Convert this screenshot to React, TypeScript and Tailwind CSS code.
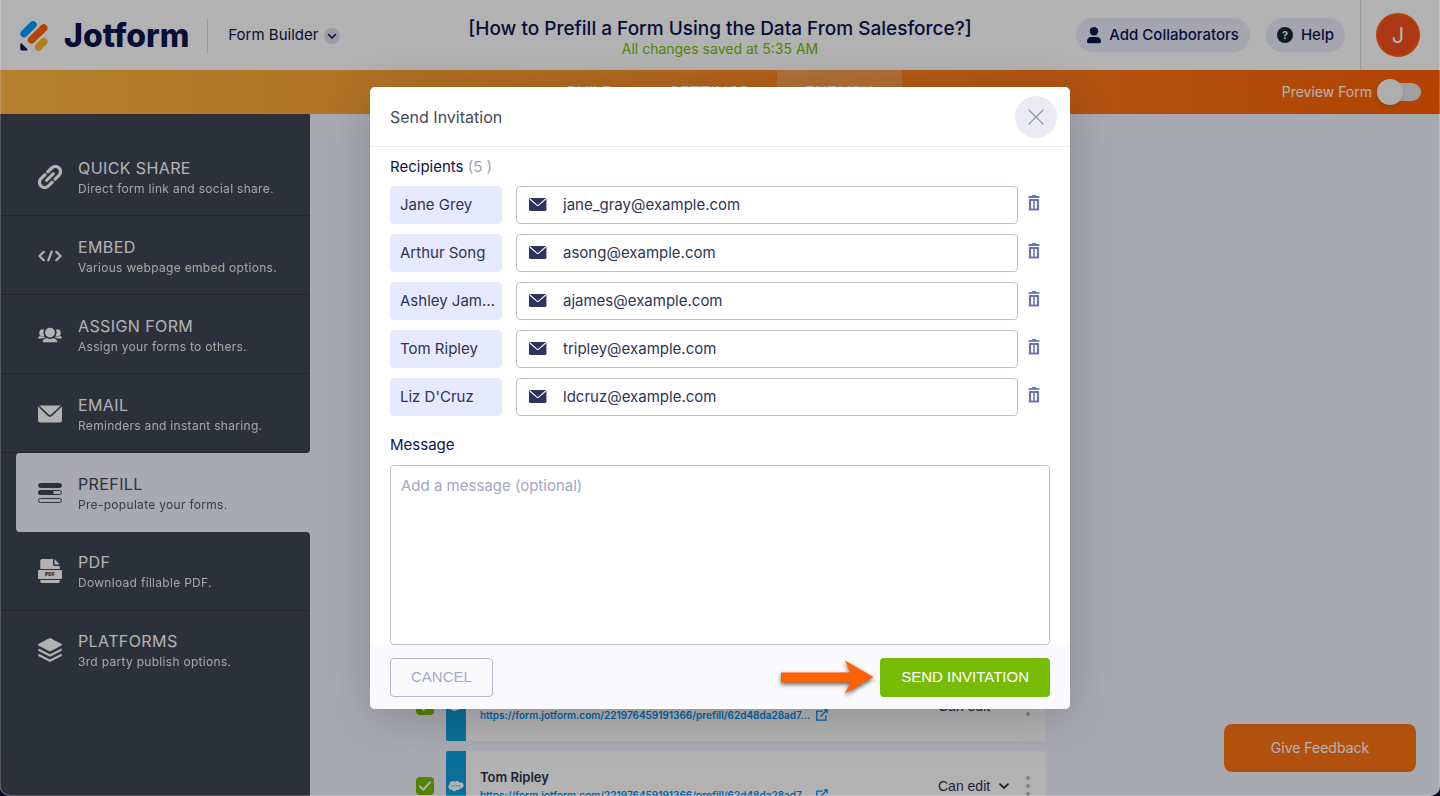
import type { ReactNode } from "react";

type NavItem = { title: string; detail: string; icon: ReactNode; active?: boolean };

const iconClass = "h-6 w-6 shrink-0";

const LinkIcon = () => (
  <svg viewBox="0 0 24 24" className={iconClass} fill="none" stroke="currentColor" strokeLinecap="round" aria-hidden="true">
    <path d="M8.600 15.400 15.400 8.600" strokeWidth="2.900" />
    <path d="M6.900 9.800 3 13.700a5.100 5.100 0 0 0 0 7.300 5.100 5.100 0 0 0 7.300 0l3.900-3.900" strokeWidth="3.200" />
    <path d="M9.800 6.900 13.700 3a5.100 5.100 0 0 1 7.300 0 5.100 5.100 0 0 1 0 7.300l-3.900 3.900" strokeWidth="3.200" />
  </svg>
);

const CodeIcon = () => (
  <svg viewBox="0 0 24 24" className={iconClass} fill="none" stroke="currentColor" strokeWidth="2.2" strokeLinecap="round" strokeLinejoin="round" aria-hidden="true">
    <path d="M5.8 7.8 1.4 12l4.4 4.2M18.2 7.8l4.4 4.2-4.4 4.2M13.7 7.6l-3.4 8.8" />
  </svg>
);

const PeopleIcon = () => (
  <svg viewBox="0 0 24 24" className={iconClass} fill="currentColor" aria-hidden="true">
    <circle cx="12" cy="9.6" r="4.9" />
    <path d="M4.6 19.2c.2-2.6 2.3-3.9 4.3-3.9 1 .5 2 .8 3.1.8s2.100-.3 3.100-.8c2 0 4.100 1.300 4.300 3.900Z" />
    <path d="M5.900 6.800a6.600 6.600 0 0 0 .4 5.800 3 3 0 0 1-5-2.800 3 3 0 0 1 4.600-3Z" />
    <path d="M18.100 6.800a6.600 6.600 0 0 1-.4 5.800 3 3 0 0 0 5-2.800 3 3 0 0 0-4.600-3Z" />
    <path d="M0 15.400c.2-1.500 1.100-2.300 2.400-2.300.7.500 2.500.7 3.900.4.4.4.8.7 1.200 1-1.100.1-2 .4-2.700.9ZM24 15.400c-.2-1.500-1.100-2.300-2.400-2.300-.7.500-2.500.7-3.900.4-.4.4-.8.7-1.200 1 1.100.1 2 .4 2.700.9Z" />
  </svg>
);

const MailIcon = () => (
  <svg viewBox="0 0 24 24" className={iconClass} fill="currentColor" aria-hidden="true">
    <path d="M1.200 3.500h21.600L13 12.700a1.500 1.500 0 0 1-2 0Z" />
    <path d="M0 4.600 9.700 13.800a3.300 3.300 0 0 0 4.600 0L24 4.600V18.300a2.200 2.200 0 0 1-2.200 2.200H2.200A2.200 2.200 0 0 1 0 18.300Z" />
  </svg>
);

const PrefillIcon = () => (
  <svg viewBox="0 0 24 24" className={iconClass} fill="none" stroke="currentColor" strokeWidth="1" aria-hidden="true">
    <rect x=".5" y="2.500" width="23" height="4" rx="2" fill="currentColor" />
    <rect x=".5" y="9.500" width="23" height="4" rx="2" />
    <path d="M2.500 9.500H15v4H2.500a2 2 0 0 1 0-4Z" fill="currentColor" />
    <rect x=".5" y="17.500" width="23" height="4" rx="2" />
  </svg>
);

const PdfIcon = () => (
  <svg viewBox="0 0 24 24" className={iconClass} aria-hidden="true">
    <path fill="currentColor" d="M2.300 1.500A1.500 1.500 0 0 1 3.800 0H15v5.500A1.500 1.500 0 0 0 16.500 7h5.200v3H2.300Z" />
    <path fill="currentColor" d="M16.500 0 21.700 5.500h-5.200ZM2.300 21h19.400v1.500a1.500 1.500 0 0 1-1.500 1.500H3.800a1.500 1.500 0 0 1-1.500-1.500Z" />
    <rect fill="currentColor" x="0" y="11" width="24" height="9" rx="1" />
    <text x="12" y="17.400" textAnchor="middle" fontSize="5" fontWeight="900" fontFamily="Inter, sans-serif" fill="#404654">PDF</text>
  </svg>
);

const LayersIcon = () => (
  <svg viewBox="0 0 24 24" className={iconClass} aria-hidden="true">
    <path fill="currentColor" d="M11.300.2a1.600 1.600 0 0 1 1.400 0L23.500 6a.8.8 0 0 1 0 1.400L12.700 13.200a1.600 1.600 0 0 1-1.400 0L.5 7.400A.8.8 0 0 1 .5 6Z" />
    <path fill="none" stroke="currentColor" strokeWidth="2.200" strokeLinecap="round" strokeLinejoin="round" d="M1.200 12 12 17.600 22.800 12M1.200 17.200 12 22.800 22.800 17.200" />
  </svg>
);

const navItems: NavItem[] = [
  { title: "QUICK SHARE", detail: "Direct form link and social share.", icon: <LinkIcon /> },
  { title: "EMBED", detail: "Various webpage embed options.", icon: <CodeIcon /> },
  { title: "ASSIGN FORM", detail: "Assign your forms to others.", icon: <PeopleIcon /> },
  { title: "EMAIL", detail: "Reminders and instant sharing.", icon: <MailIcon /> },
  { title: "PREFILL", detail: "Pre-populate your forms.", icon: <PrefillIcon />, active: true },
  { title: "PDF", detail: "Download fillable PDF.", icon: <PdfIcon /> },
  { title: "PLATFORMS", detail: "3rd party publish options.", icon: <LayersIcon /> },
];

const recipients = [
  { name: "Jane Grey", email: "jane_gray@example.com" },
  { name: "Arthur Song", email: "asong@example.com" },
  { name: "Ashley Jam...", email: "ajames@example.com" },
  { name: "Tom Ripley", email: "tripley@example.com" },
  { name: "Liz D'Cruz", email: "ldcruz@example.com" },
];

const links = [
  { name: "Ashley James", url: "https://form.jotform.com/221976459191366/prefill/62d48da28ad7..." },
  { name: "Tom Ripley", url: "https://form.jotform.com/221976459191366/prefill/62d48da28ad7..." },
];

function Header() {
  return (
    <header className="grid h-[70px] shrink-0 grid-cols-[1fr_auto_1fr] items-center bg-white text-[#0a1551]">
      <div className="flex items-center pt-px pl-5">
        <a href="#home" className="flex items-center gap-4">
          <svg viewBox="0 0 28 32" className="h-8 w-7" aria-hidden="true">
            <g fill="none" strokeLinecap="round" strokeWidth="7.400">
              <path d="M4.100 13.600 13 4.900" stroke="#0099ff" />
              <path d="M11.500 19.900 23.800 8" stroke="#ff6100" />
              <path d="M18.600 27 23.800 21.700" stroke="#ffb629" />
            </g>
            <path d="M.3 24c0-.8.900-1.100 1.400-.6l5.500 5.500c.700.700.200 1.700-.7 1.700H2A1.700 1.700 0 0 1 .3 28.900Z" fill="#0a1551" />
          </svg>
          <span className="text-[32px] leading-8 font-extrabold">Jotform</span>
        </a>
        <span className="ml-[18px] h-[34px] w-px bg-[#d5d6e8]" />
        <button className="ml-5 flex items-center gap-[6px] text-[15px]">
          Form Builder
          <span className="flex h-4 w-4 items-center justify-center rounded-full bg-[#dfdff2]">
            <svg viewBox="0 0 10 10" className="h-[10px] w-[10px]" fill="none" stroke="currentColor" strokeWidth="1.600" strokeLinecap="round" strokeLinejoin="round" aria-hidden="true">
              <path d="M1.500 3.500 5 7l3.500-3.500" />
            </svg>
          </span>
        </button>
      </div>
      <div className="flex flex-col items-center pt-[3px]">
        <h1 className="text-[19px] leading-6 font-medium">[How to Prefill a Form Using the Data From Salesforce?]</h1>
        <p className="text-sm leading-4 text-[#78bb07]">All changes saved at 5:35 AM</p>
      </div>
      <div className="flex h-full items-center justify-end">
        <button className="flex h-[34px] items-center gap-2 rounded-full bg-[#ececfd] px-[11px] text-[15px] font-medium">
          <svg viewBox="0 0 14 17" className="h-[17px] w-[14px]" fill="currentColor" aria-hidden="true">
            <circle cx="7" cy="4.300" r="4.200" />
            <path d="M0 14.600C0 11.800 1.800 9.900 4 9.900h6c2.200 0 4 1.900 4 4.700 0 1-.7 1.700-1.700 1.700H1.700C.7 16.300 0 15.600 0 14.600Z" />
          </svg>
          Add Collaborators
        </button>
        <button className="ml-4 flex h-[34px] items-center gap-2 rounded-full bg-[#ececfd] px-[11px] text-[15px] font-medium">
          <span className="flex h-4 w-4 items-center justify-center rounded-full bg-[#18232f] text-[11px] leading-4 font-bold text-[#ececfd]">?</span>
          Help
        </button>
        <div className="ml-[15px] flex h-full items-center border-l border-[#dcdce4] px-[15px] pr-5">
          <span className="flex h-11 w-11 items-center justify-center rounded-full border-2 border-[#ff6100] bg-[#f7501d] text-[22px] text-white">J</span>
        </div>
      </div>
    </header>
  );
}

function TabBar() {
  return (
    <div className="grid h-11 shrink-0 grid-cols-[1fr_auto_1fr] bg-linear-to-r from-[#ffb942] to-[#ff5f00] text-white">
      <nav className="col-start-2 flex text-base font-medium">
        <a href="#build" className="flex items-center px-7">BUILD</a>
        <a href="#settings" className="flex items-center px-7">SETTINGS</a>
        <a href="#publish" className="flex items-center bg-white/20 px-7">PUBLISH</a>
      </nav>
      <label className="flex items-center justify-end gap-[5px] pr-[19px] text-sm">
        Preview Form
        <span className="relative flex h-[26px] w-11 items-center">
          <input type="checkbox" className="h-[18px] w-11 appearance-none rounded-full bg-[#e4e4e6]" />
          <span className="pointer-events-none absolute top-0 left-0 h-[26px] w-[26px] rounded-full bg-[#fafafa] shadow-md" />
        </span>
      </label>
    </div>
  );
}

function Sidebar() {
  return (
    <nav className="w-[310px] shrink-0 bg-[#404654] pt-[23px] text-white">
      {navItems.map((item, i) => {
        const next = navItems[i + 1];
        return (
          <div key={item.title} className="bg-[#f3f3ff]">
            <div className={item.active ? "bg-[#404654] pl-4" : ""}>
              <a
                href={"#" + item.title.toLowerCase().replace(" ", "-")}
                className={
                  item.active
                    ? "flex h-[79px] items-center gap-4 rounded-l-[4px] bg-[#f3f3ff] pl-[22px] text-[#404654]"
                    : next?.active
                      ? "flex h-[79px] items-center gap-4 rounded-br-[4px] border-b border-[#343944] bg-[#404654] pt-[2px] pl-[38px]"
                      : navItems[i - 1]?.active
                        ? "flex h-[79px] items-center gap-4 rounded-tr-[4px] border-b border-[#343944] bg-[#404654] pl-[38px]"
                        : next
                          ? "flex h-[79px] items-center gap-4 border-b border-[#343944] bg-[#404654] pt-[2px] pl-[38px]"
                          : "flex h-[78px] items-center gap-4 bg-[#404654] pl-[38px]"
                }
              >
                {item.icon}
                <span className="flex flex-col">
                  <span className="text-base leading-6 tracking-wide">{item.title}</span>
                  <span className="text-xs leading-[18px] tracking-wide opacity-90">{item.detail}</span>
                </span>
              </a>
            </div>
          </div>
        );
      })}
    </nav>
  );
}

function LinkRow({ name, url }: { name: string; url: string }) {
  return (
    <li className="flex items-center gap-3">
      <label className="relative flex h-[18px] w-[18px]">
        <input type="checkbox" defaultChecked aria-label={"Select " + name} className="h-[18px] w-[18px] appearance-none rounded-[4px] bg-[#78bb07]" />
        <svg viewBox="0 0 14 14" className="pointer-events-none absolute inset-[2px] h-[14px] w-[14px]" fill="none" stroke="#fff" strokeWidth="2" strokeLinecap="round" strokeLinejoin="round" aria-hidden="true">
          <path d="m2 7.400 3.400 3.400L12 3.200" />
        </svg>
      </label>
      <div className="flex h-[70px] flex-1 overflow-hidden rounded-[2px] bg-white">
        <span className="flex w-5 items-center justify-center bg-[#109fdc]">
          <svg viewBox="0 0 16 12" className="h-3 w-4" aria-hidden="true">
            <path fill="#fff" d="M6.600 1.900a3 3 0 0 1 4.600.5 3.200 3.200 0 0 1 4.400 3.100c0 2-1.800 3.400-3.600 3a2.500 2.500 0 0 1-3.300 1.200 2.800 2.800 0 0 1-5-.2C1.700 9.800.4 8.400.4 6.900c0-1 .5-1.800 1.300-2.300A2.900 2.900 0 0 1 6.600 1.900Z" />
            <path d="M3.500 5.900h9" stroke="#109fdc" strokeWidth=".8" strokeDasharray="1 .5" />
          </svg>
        </span>
        <div className="flex flex-1 flex-col pt-4 pl-[14px]">
          <p className="text-[13px] leading-5 font-semibold text-[#2c3345]">{name}</p>
          <a href={url} className="flex items-center gap-[6px] text-[10px] leading-4 font-semibold text-[#0090f0]">
            {url}
            <svg viewBox="0 0 12 12" className="h-3 w-3" fill="none" stroke="currentColor" strokeWidth="1.300" aria-hidden="true">
              <path d="M7 2.200H.8v9h9V6.500M4.500 7.500 10.800 1.200M7.800.8h3.400v3.400" />
            </svg>
          </a>
        </div>
        <div className="flex items-center gap-[13px] pr-3 text-[#2c3345]">
          <label className="relative flex items-center">
            <select aria-label={"Permission for " + name} className="w-[71px] appearance-none bg-transparent font-['Liberation_Sans',sans-serif] text-sm">
              <option>Can edit</option>
            </select>
            <svg viewBox="0 0 10 10" className="pointer-events-none absolute right-0 h-[10px] w-[10px]" fill="none" stroke="currentColor" strokeWidth="1.800" strokeLinecap="round" aria-hidden="true">
              <path d="M1 3.200 5 7l4-3.800" />
            </svg>
          </label>
          <button aria-label="More" className="flex w-3 justify-center text-[#b4b6c8]">
            <svg viewBox="0 0 4 20" className="h-5 w-1" fill="currentColor" aria-hidden="true">
              <circle cx="2" cy="2" r="1.900" />
              <circle cx="2" cy="10" r="1.900" />
              <circle cx="2" cy="18" r="1.900" />
            </svg>
          </button>
        </div>
      </div>
    </li>
  );
}

function InvitationDialog() {
  return (
    <section role="dialog" aria-labelledby="dialog-title" className="w-[700px] overflow-hidden rounded-[5px] bg-white font-[Inter,sans-serif] text-[15px] text-[#2c3556] shadow-[0_8px_48px_rgba(0,0,0,0.2)]">
      <header className="flex h-[60px] items-center justify-between border-b border-[#ececf2] pt-[2px] pr-[13px] pl-5">
        <h2 id="dialog-title" className="text-base text-[#434a56]">Send Invitation</h2>
        <button aria-label="Close" className="flex h-[42px] w-[42px] items-center justify-center rounded-full bg-[#ebebf5] text-[#96979f]">
          <svg viewBox="0 0 16 16" className="h-4 w-4" fill="none" stroke="currentColor" strokeWidth="1.300" strokeLinecap="round" aria-hidden="true">
            <path d="m1 1 14 14M15 1 1 15" />
          </svg>
        </button>
      </header>
      <div className="px-5 pt-2">
        <h3 className="leading-6 text-[#0a1551]">
          Recipients <span className="text-[#9ba2c0]">(5 )</span>
        </h3>
        <ul className="mt-[7px] flex flex-col gap-[10px]">
          {recipients.map((r, i) => (
            <li key={r.email} className="flex items-center">
              <label htmlFor={"email-" + i} className="flex h-[38px] w-[112px] items-center rounded-[4px] bg-[#e6e9ff] px-[10px] pt-px whitespace-nowrap">{r.name}</label>
              <div className="ml-[14px] flex h-[38px] flex-1 items-center gap-4 rounded-[4px] border border-[#bfc0d4] pl-3">
                <svg viewBox="0 0 18 13" className="h-[13px] w-[18px] text-[#2c3461]" aria-hidden="true">
                  <rect width="17.400" height="13" rx="1.600" fill="currentColor" />
                  <path d="m.8 1 7.100 6.100a1.300 1.300 0 0 0 1.700 0L16.700 1" fill="none" stroke="#fff" strokeWidth="1.100" />
                </svg>
                <input id={"email-" + i} type="email" defaultValue={r.email} className="h-full min-w-0 flex-1 bg-transparent outline-none" />
              </div>
              <button aria-label={"Remove " + r.name} className="mr-[10px] ml-[10px] pb-[3px] text-[#6f76a7]">
                <svg viewBox="0 0 12 16" className="h-4 w-3" fill="none" stroke="currentColor" aria-hidden="true">
                  <path d="M.5 2h11" strokeWidth="1.800" />
                  <path d="M4 .8h4" strokeWidth="1.600" />
                  <path d="M2 5h8v9.500H2Z" strokeWidth="2.200" />
                  <path d="M6 4.500v10" strokeWidth="1.600" />
                </svg>
              </button>
            </li>
          ))}
        </ul>
        <label htmlFor="message" className="mt-[17px] block leading-6 text-[#0a1551]">Message</label>
        <textarea id="message" placeholder="Add a message (optional)" className="mt-2 block h-[180px] w-full resize-none rounded-[4px] border border-[#bfc0d4] px-[10px] py-2 leading-6 outline-none placeholder:text-[#a3a8be]" />
      </div>
      <footer className="flex items-center bg-[#fafafc] px-5 pt-[13px] pb-3 font-['Liberation_Sans',sans-serif] text-[15px]">
        <button className="h-[39px] rounded-[4px] border border-[#b4b8d4] px-5 text-[#a5abc9]">CANCEL</button>
        <svg viewBox="0 0 94 38" className="mr-[6px] ml-auto h-[38px] w-[94px] overflow-visible drop-shadow-[0_2px_2px_rgba(0,0,0,0.6)]" aria-hidden="true">
          <path d="M1 14.500H70.500L65 2.500 93.500 19 65 35.500 70.500 24.500H1Z" fill="#ff6100" />
        </svg>
        <button className="h-[39px] rounded-[4px] bg-[#78bb07] px-[21px] text-white">SEND INVITATION</button>
      </footer>
    </section>
  );
}

export default function App() {
  return (
    <div className="h-screen overflow-hidden bg-[#02041f] font-[Inter,sans-serif]">
      <div className="relative flex h-full flex-col overflow-hidden rounded-b-[10px] bg-[#f3f3ff]">
        <Header />
        <TabBar />
        <div className="flex min-h-0 flex-1">
          <Sidebar />
          <main className="min-w-0 flex-1 overflow-hidden pt-[557px]">
            <ul className="ml-[106px] flex w-[630px] flex-col gap-[10px]">
              {links.map((l) => (
                <LinkRow key={l.name} name={l.name} url={l.url} />
              ))}
            </ul>
          </main>
        </div>
        <button className="absolute right-6 bottom-6 h-12 w-48 rounded-lg bg-[#ff7415] text-sm text-white">Give Feedback</button>
        <div className="absolute inset-0 flex items-center justify-center rounded-b-[10px] border border-t-0 border-white/20 bg-black/30">
          <InvitationDialog />
        </div>
      </div>
    </div>
  );
}
